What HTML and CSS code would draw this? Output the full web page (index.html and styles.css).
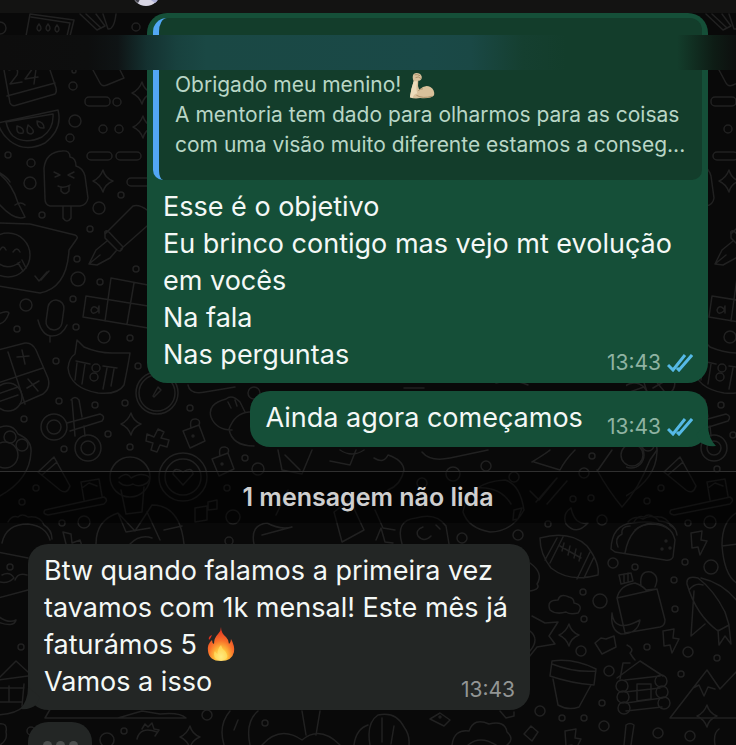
FILE: index.html
```html
<!DOCTYPE html>
<html lang="pt">
<head>
    <meta charset="UTF-8">
    <meta name="viewport" content="width=device-width, initial-scale=1.0">
    <title>Conversa</title>
    <link rel="stylesheet" href="styles.css">
</head>
<body>

<!-- Wallpaper doodles -->
<svg class="wallpaper" viewBox="0 0 736 745" preserveAspectRatio="xMidYMin slice" aria-hidden="true">
    <defs>
        <path id="star" d="M0-11Q2-3 10 0Q2 3 0 11Q-3 3-10 0Q-3-3 0-11Z"/>
        <path id="bolt" d="M-7-10L4-12L3-3L9-2L2 12L0 4L-6 5Z"/>
        <g id="lock"><path d="M-10-5L6-11L12 5L-3 12ZM-2-8Q-4-18 3-17Q8-16 6-11"/><circle r="1"/></g>
    </defs>
    <g id="tile">
        <!-- box, pencils, calendar, watermelon -->
        <path d="M26 36L30 14L74 20L70 36M31 17L70 23L67 36M80 14L97 30L105 26L96 14M86 14L101 28M103 14L108 29Q114 30 116 14"/>
        <path d="M39 24q-4 5 0 7q4-2 0-7M48 24q-4 5 0 7q4-2 0-7M57 25q-4 5 0 7q4-2 0-7"/>
        <path d="M4 70L10 103Q12 107 17 105L55 94Q57 92 56 88L50 70M7 96L55 83M93 70L100 83Q102 87 107 85L124 78L120 70"/>
        <path d="M9 70Q20 66 17 75L10 84L22 82M33 68L25 79L38 77M36 69L34 84"/>
        <path d="M-2 123L58 110Q63 129 45 143Q25 153 10 141Q1 134-2 123M6 122L53 114Q54 129 42 137Q25 145 13 136Q8 131 6 122"/>
        <path d="M17 126q-1 9 6 7q2-5-6-7M28 125q-3 9 3 9q6-2-3-9M37 121q0 8 7 7q0-6-7-7"/>
        <rect x="85" y="97" width="25" height="9" rx="4"/><rect x="87" y="152" width="25" height="8" rx="4"/>
        <rect x="116" y="152" width="25" height="8" rx="4"/><rect x="127" y="178" width="24" height="8" rx="4"/>
        <use href="#star" x="142" y="93"/><use href="#star" x="143" y="127"/><use href="#star" x="103" y="181"/>
        <!-- ice cream -->
        <path d="M45 199L44 168Q46 152 62 151Q70 150 70 157Q76 158 76 166Q83 168 85 176L88 198Q87 205 80 206L50 206Q45 205 45 199M63 206V218Q67 224 71 218V206M54 172l6 3l-5 2M74 172l-6 3l6 3M58 186q6 3 12-1M61 187v4q4 5 8 0v-5"/>
        <path d="M-2 173Q12 183 18 203L25 217Q15 222-2 203M0 173Q8 178 10 182M15 205q6-4 10 0"/>
        <!-- marker -->
        <path d="M105 234L133 206Q139 204 147 210M121 249L147 226M105 234Q104 230 108 231L123 247Q121 253 117 250L105 238ZM107 241L96 250L89 264L97 265L110 258L116 251M89 264L100 255"/>
        <!-- banner with face -->
        <path d="M-2 223L30 224L75 235Q79 237 76 240L69 250Q67 288 40 293L-2 286M35 276l4 5l8-9M41 280l8-9"/>
        <circle cx="8" cy="255" r="22"/><path d="M0 250q3-6 6 0M13 252q4-6 7 0M-2 263Q8 271 20 262M18 263l5 8M22 260l4 8"/>
        <!-- microphone -->
        <rect x="47" y="300" width="16" height="30" rx="8" transform="rotate(8 55 315)"/><path d="M38 320Q42 336 52 336Q62 336 67 325M50 336V342"/>
        <!-- keypad -->
        <path d="M86 296L148 306M83 317L148 328M86 296L83 317M111 278L105 321M134 283L127 324M111 278L148 285"/><path d="M98 309q-5-5-7 1q1 6 7 1l1-5v7"/>
        <path d="M-2 314Q8 310 9 313Q5 324-2 324"/>
        <!-- calculator -->
        <path d="M-2 350L25 343Q32 342 36 350L48 378Q51 388 43 394L20 404M8 352L25 404M-2 383L43 368M17 357l12-1M22 350l3 14M27 388l12-7M28 379l10 12"/><circle cx="8" cy="397" r="14"/><path d="M-2 394l20-7M-2 402l20-7"/>
        <!-- cat -->
        <path d="M77 340L84 347Q98 353 112 353L130 353Q128 366 124 385Q118 395 98 393Q70 388 68 368Q69 358 75 354ZM76 361L90 364M77 363L75 380M85 364L82 384M103 366L117 368M107 368L103 389M114 369L111 386"/><circle cx="96" cy="368" r="4"/><circle cx="94" cy="377" r="4"/>
        <!-- scissors -->
        <circle cx="54" cy="427" r="13"/><circle cx="54" cy="427" r="7"/><circle cx="88" cy="448" r="13"/><circle cx="88" cy="448" r="7"/>
        <path d="M67 423L100 414Q106 416 102 421L70 431M71 400Q75 395 79 400L82 417M72 400L75 436M84 426L85 436"/>
        <!-- paw -->
        <circle cx="5" cy="455" r="13"/><circle cx="10" cy="437" r="6"/><circle cx="22" cy="445" r="6"/><path d="M-2 428Q12 422 18 434Q32 440 31 452Q30 480-2 497"/>
        <!-- cone, brush -->
        <path d="M38 472L54 457L70 486Q67 495 60 490ZM42 475L57 462M45 510L104 497Q109 500 104 504L48 515Q42 514 45 510M84 500L81 482L99 479L102 496M82 488l7-5l8 3"/>
        <!-- hat and man on the left edge -->
        <path d="M2 543Q6 524 28 524Q46 526 50 540M8 522q4-7 10-5q4-4 10 0q12-2 16 8q8 5 8 14M-2 552L28 558M2 575q8-4 12 3q-6 6-14 4M15 580q3-8 12-5M-2 598L28 590M-2 622Q14 628 16 620Q8 624-2 616"/>
        <path d="M-2 679L16 661L28 672M-2 680L28 676M0 688H24M9 686V702M24 684L22 706M-2 702H22M-2 715Q16 714 24 706M-2 724q10-2 8 8q2 8-6 13"/>
        <path d="M63 532l8 2l1 9l8-3l2 6l-7 5l-8-3z"/>
    </g>
    <!-- right edge repeats the upper left doodles -->
    <g clip-path="url(#upper)"><use href="#tile" x="626"/></g>
    <clipPath id="upper"><rect x="626" y="0" width="110" height="530"/></clipPath>
    <!-- middle strip, under the bubbles -->
    <circle cx="157" cy="393" r="21"/><circle cx="157" cy="393" r="18"/><path d="M153 396l5-9l3 3l-7 7zM188 385Q190 395 205 392L235 387"/>
    <use href="#star" x="131" y="424"/>
    <path d="M147 434l7 3l4-8l6 3l-3 6l8 2l-2 7l-7-2l-3 7l-6-2l2-7l-7-2z"/>
    <use href="#lock" x="193" y="436"/><use href="#lock" x="222" y="464"/>
    <path d="M211 417Q207 404 226 399Q232 394 240 402L245 412M211 417Q216 430 232 430M229 429Q235 413 249 412L258 412M229 429Q232 446 254 446M228 402l3 6M235 400l2 6"/>
    <circle cx="130" cy="477" r="20"/><path d="M119 478q8-7 12 0q8-5 14-3q8 2 2 8q-8 5-14 1q-8 4-14-2M121 490L126 514L142 512L144 487M96 544Q96 520 118 513L135 531L152 505Q180 505 184 544M118 513L126 532L150 528M130 544q10-10 22-6M147 512L160 540M164 530l18-4"/>
    <circle cx="183" cy="477" r="24"/><circle cx="183" cy="477" r="18"/><path d="M183 485L173 474Q174 466 183 472Q192 466 193 474Z"/>
    <path d="M195 508l12-2v14l-12 2zM208 502l9-2v9l-9 1zM254 544Q250 525 267 523Q280 530 292 527L262 535M278 450L282 470L302 474L312 450M285 455L300 470M330 461L350 465L356 450M276 515L288 490M334 512L350 500L364 530L342 542Z"/>
    <path d="M374 458q10 6 14-3q15 5 16 15q-3 15-16 20M375 510l8 18l12 2M402 544Q395 520 416 518Q436 512 446 526L449 544M423 527q-8 3-5 9q6 7 13 0M440 529l-4-4"/>
    <path d="M422 452Q430 462 450 458L488 450M532 462Q548 452 550 450M534 462L560 470Q565 460 575 450M463 512Q468 482 505 480Q520 484 524 510Q512 532 490 532Q468 528 463 512M476 488q24-2 35 16M514 510l8-2l-4 11l-5 1z"/>
    <path d="M530 491l9 9l18-22M536 502l20-23M547 504l20-23M597 470Q608 490 622 507Q638 490 650 460L657 450M598 470L612 450"/>
    <path d="M376 540l5-12l4 14l8 1M404 388h20M496 383q16-5 32 2M340 450q12 8 24 0"/>
    <!-- moon, football -->
    <path d="M571 508Q562 514 566 524Q576 536 588 523Q575 526 571 508"/>
    <path d="M540 538Q570 530 587 546Q600 563 598 575Q570 583 551 568Q540 554 540 538M545 560L557 538M550 563L563 537M577 579L590 552M584 578L594 557M560 546L581 558M564 543l-2 8M570 546l-2 9M576 549l-2 9M581 553l-2 8"/>
    <!-- taco -->
    <path d="M611 549Q612 525 632 523Q670 518 675 540L673 557Q671 561 665 560L615 552ZM625 553Q630 525 652 523M628 522q6-7 15-3q10-6 16 2q16 1 18 14M618 547q-4-9 4-13q-1-8 8-8"/>
    <circle cx="666" cy="541" r="1"/><circle cx="662" cy="549" r="1"/><circle cx="670" cy="548" r="1"/>
    <use href="#bolt" x="698" y="543"/><use href="#bolt" x="670" y="641"/><use href="#bolt" x="572" y="741"/>
    <path d="M738 512Q722 520 722 545Q724 576 738 584M722 546l16-2"/>
    <!-- jar -->
    <path d="M617 598Q620 585 635 583Q643 586 646 590L657 589L665 620Q665 626 660 627L625 633L617 598L657 589M619 575l12-2l2 8l-12 3zM624 574v8M628 573v8M641 586q-2-16 10-14q9 4 4 15M612 613Q614 634 640 620Q638 634 621 634Q610 630 612 613"/>
    <!-- rocket -->
    <path d="M687 584Q686 575 698 578Q714 590 725 612L729 625L718 631Q696 615 687 584M694 591l-3 45l14-12M701 578Q723 583 738 602M689 590q6-8 14-5M718 630l1 15l6-9l6 8l-2-18"/>
    <!-- cloud, splash, camera -->
    <path d="M550 610q-4-10 8-10q2-7 11-3q5 1 5 6q10 2 4 10q-8 2-12-1q-10 3-16-2M532 616l13 7l13-1l-9 14l6 8l-18 3l-8 10M530 563q14 10 7 21q4 5-7 7M530 631q10 8 0 20M595 643l6-5l5 1l8-3l2 11l-14 7z"/>
    <use href="#star" x="569" y="635"/><use href="#star" x="190" y="737"/><use href="#star" x="707" y="716"/>
    <!-- flower pot -->
    <path d="M552 661Q574 658 596 669L594 685Q570 683 550 676ZM552 664Q575 673 596 671M553 679L558 705Q568 711 579 707L591 685"/>
    <!-- log house -->
    <path d="M617 678L640 661L663 676M620 679L623 663H630M625 680L660 676M625 692L660 688M626 703L662 698M637 684h14v15l-14 2zM626 711L662 707M627 645q8 4 3 8q3 5 5 7"/>
    <circle cx="622" cy="686" r="6"/><circle cx="623" cy="697" r="6"/><circle cx="624" cy="708" r="6"/><circle cx="661" cy="681" r="6"/><circle cx="662" cy="692" r="6"/><circle cx="664" cy="703" r="6"/>
    <!-- mountain -->
    <path d="M670 718L707 670L720 689L738 670M670 718H738M693 688l6-3l5 11l4-9l7 2"/>
    <!-- bottom strip -->
    <path d="M45 718L52 706M45 718H186Q180 712 160 714L142 711L118 718M137 739q3-13 20-7M142 729l3-5l3 3l4-4l2 6l5 1l-4 6M224 745Q218 725 230 711M250 745Q245 722 258 711M238 720l-4 10M262 745Q280 725 302 740Q320 725 340 745M306 735L302 711M316 735L320 711M354 745q2-16 14-20"/>
    <path d="M370 745q-4-22 8-30q18-4 26 12q6 8 5 18M382 718v24M394 726l-3 18M430 719l10-6l10 7l-6 6zM452 745q2-16 17-14q5-14 20-7q16-4 18 8q8 7 0 13M468 745q12-10 28 0M500 711l6 7l8-2v-4M524 734l7-8l7 6l-6 9zM624 745l2-20q4-3 8 0l-3 20M715 745q-2-12 4-16"/>
    <!-- loose dots -->
    <circle cx="0" cy="28" r="6"/><circle cx="136" cy="27" r="4"/><circle cx="73" cy="86" r="4"/><circle cx="74" cy="71" r="2"/><circle cx="117" cy="102" r="4"/><circle cx="75" cy="121" r="6"/><circle cx="103" cy="129" r="4"/><circle cx="119" cy="129" r="4"/><circle cx="728" cy="129" r="4"/><circle cx="70" cy="138" r="4"/><circle cx="8" cy="155" r="3"/><circle cx="31" cy="163" r="4"/><circle cx="30" cy="183" r="6"/><circle cx="121" cy="195" r="3"/>
    <circle cx="99" cy="208" r="6"/><circle cx="90" cy="229" r="3"/><circle cx="42" cy="215" r="3"/><circle cx="77" cy="259" r="3"/><circle cx="78" cy="279" r="7"/><circle cx="100" cy="282" r="3"/><circle cx="136" cy="269" r="3"/><circle cx="73" cy="299" r="3"/><circle cx="26" cy="305" r="6"/><circle cx="17" cy="329" r="3"/><circle cx="76" cy="327" r="3"/><circle cx="104" cy="337" r="6"/><circle cx="130" cy="338" r="3"/><circle cx="56" cy="361" r="3"/><circle cx="138" cy="366" r="3"/>
    <circle cx="59" cy="401" r="3"/><circle cx="95" cy="405" r="3"/><circle cx="125" cy="403" r="3"/><circle cx="24" cy="419" r="3"/><circle cx="108" cy="434" r="3"/><circle cx="64" cy="449" r="3"/><circle cx="130" cy="447" r="3"/><circle cx="190" cy="408" r="3"/><circle cx="254" cy="393" r="6"/><circle cx="245" cy="458" r="3"/><circle cx="258" cy="469" r="6"/>
    <circle cx="36" cy="488" r="3"/><circle cx="22" cy="502" r="3"/><circle cx="62" cy="523" r="3"/><circle cx="84" cy="522" r="6"/><circle cx="10" cy="567" r="3"/><circle cx="21" cy="647" r="3"/><circle cx="233" cy="517" r="7"/><circle cx="227" cy="488" r="3"/><circle cx="229" cy="541" r="4"/><circle cx="207" cy="715" r="5"/><circle cx="124" cy="731" r="3"/><circle cx="107" cy="740" r="7"/><circle cx="265" cy="723" r="3"/><circle cx="31" cy="731" r="4"/>
    <circle cx="453" cy="474" r="7"/><circle cx="486" cy="466" r="5"/><circle cx="514" cy="477" r="5"/><circle cx="422" cy="483" r="5"/><circle cx="518" cy="535" r="5"/><circle cx="462" cy="538" r="5"/><circle cx="548" cy="524" r="3"/><circle cx="584" cy="473" r="5"/><circle cx="592" cy="456" r="3"/><circle cx="632" cy="455" r="11"/><circle cx="573" cy="499" r="3"/><circle cx="591" cy="498" r="3"/><circle cx="602" cy="520" r="5"/><circle cx="647" cy="501" r="3"/><circle cx="661" cy="488" r="3"/><circle cx="717" cy="469" r="3"/><circle cx="688" cy="523" r="3"/><circle cx="710" cy="522" r="6"/>
    <circle cx="613" cy="563" r="5"/><circle cx="635" cy="567" r="3"/><circle cx="685" cy="562" r="3"/><circle cx="711" cy="567" r="7"/><circle cx="583" cy="592" r="3"/><circle cx="600" cy="601" r="7"/><circle cx="584" cy="619" r="3"/><circle cx="674" cy="580" r="3"/><circle cx="675" cy="609" r="3"/><circle cx="581" cy="651" r="5"/><circle cx="647" cy="647" r="3"/><circle cx="688" cy="652" r="5"/><circle cx="717" cy="658" r="3"/><circle cx="609" cy="671" r="5"/><circle cx="681" cy="674" r="3"/><circle cx="602" cy="703" r="3"/><circle cx="540" cy="711" r="5"/><circle cx="562" cy="718" r="3"/><circle cx="584" cy="718" r="3"/><circle cx="604" cy="726" r="5"/><circle cx="658" cy="733" r="5"/><circle cx="690" cy="736" r="5"/><circle cx="440" cy="717" r="1"/><circle cx="730" cy="337" r="6"/><circle cx="721" cy="405" r="3"/><circle cx="733" cy="435" r="3"/>
</svg>

<header class="topbar">
    <svg class="avatar" viewBox="0 0 28 28" aria-hidden="true">
        <circle cx="14" cy="14" r="14" fill="#d8d6e4"/>
        <path d="M0 14A14 14 0 0 0 6 25L12 14Z" fill="#42424c"/>
        <path d="M16 20L28 16Q27 22 23 25Z" fill="#aeb1d8"/>
    </svg>
</header>

<div class="redaction"></div>

<main class="chat">
    <article class="bubble sent long">
        <blockquote class="quote">
            <p>Obrigado meu menino! <svg class="emoji" viewBox="0 0 28 30" role="img" aria-label="bíceps">
                <path d="M5 2Q8 0 12 2Q15 5 13 8Q11 10 10 9Q9 15 11 19Q17 13 23 16Q28 19 27 25Q24 29 12 28Q5 29 1 27Q2 19 5 10Q3 5 5 2Z" fill="#d9c19b"/>
                <path d="M1 27Q2 19 5 10L9 10Q7 18 9 23Q5 23 4 28Z" fill="#eddcba"/>
                <path d="M6 3Q9 2 12 4M7 6Q10 4 13 7M10 20Q12 18 15 18M8 25Q15 29 25 26" fill="none" stroke="#a98c66" stroke-width="1"/>
            </svg></p>
            <p>A mentoria tem dado para olharmos para as coisas com uma visão muito diferente estamos a conseg...</p>
        </blockquote>
        <div class="body">
            <p>Esse é o objetivo<br>Eu brinco contigo mas vejo mt evolução em vocês<br>Na fala<br>Nas perguntas</p>
            <div class="meta">
                <time>13:43</time>
                <svg class="ticks" viewBox="0 0 26 18" role="img" aria-label="Lida"><path d="M1 11L6 16L18 1M10 14L12 16L25 1"/></svg>
            </div>
        </div>
    </article>

    <article class="bubble sent short">
        <div class="body">
            <p>Ainda agora começamos</p>
            <div class="meta">
                <time>13:43</time>
                <svg class="ticks" viewBox="0 0 26 18" role="img" aria-label="Lida"><path d="M1 11L6 16L18 1M10 14L12 16L25 1"/></svg>
            </div>
        </div>
        <svg class="tail tail-right" viewBox="0 0 20 24" aria-hidden="true"><path d="M12 0Q12 14 20 22Q10 23 4 18L0 10Z"/></svg>
    </article>

    <div class="unread">1 mensagem não lida</div>

    <article class="bubble received">
        <div class="body">
            <p>Btw quando falamos a primeira vez<br>tavamos com 1k mensal! Este mês já<br>faturámos 5 <svg class="emoji fire" viewBox="0 0 28 36" role="img" aria-label="fogo">
                <defs>
                    <radialGradient id="flame" cx="50%" cy="88%" r="80%">
                        <stop offset="0" stop-color="#fff3a0"/>
                        <stop offset="0.3" stop-color="#ffc03a"/>
                        <stop offset="0.6" stop-color="#f9712a"/>
                        <stop offset="1" stop-color="#df3421"/>
                    </radialGradient>
                </defs>
                <path d="M14 1Q14 7 19 11Q22 14 22 18Q24 16 24 13Q28 20 27 26Q25 35 14 35Q2 35 1 25Q0 18 5 14Q5 17 7 18Q7 12 11 8Q14 5 14 1Z" fill="url(#flame)"/>
                <path d="M3 10Q1 12 2 14Q4 12 5 9Z" fill="#df3421"/>
                <path d="M14 19Q15 23 18 25Q22 30 19 33Q13 36 8 32Q6 28 8 25Q9 28 11 28Q10 23 14 19Z" fill="#ffe66b" opacity="0.6"/>
            </svg><br>Vamos a isso</p>
            <div class="meta"><time>13:43</time></div>
        </div>
        <svg class="tail tail-left" viewBox="0 0 20 24" aria-hidden="true"><path d="M8 0Q8 14 0 22Q10 23 16 18L20 10Z"/></svg>
    </article>

    <article class="bubble typing" aria-label="a escrever"><i></i><i></i><i></i></article>
</main>

</body>
</html>
```
FILE: styles.css
```css
* {
    box-sizing: border-box;
}
body {
    position: relative;
    display: flex;
    flex-direction: column;
    margin: 0;
    height: 100vh;
    overflow: hidden;
    background-color: #090909;
    font-family: Inter, "Liberation Sans", sans-serif;
    color: #f4f8f6;
}
p, blockquote {
    margin: 0;
}
.wallpaper {
    position: absolute;
    inset: 0;
    z-index: -1;
    width: 100%;
    height: 100%;
    fill: none;
    stroke: #212121;
    stroke-width: 1.5;
    stroke-linejoin: round;
    stroke-linecap: round;
}

/* Top bar */
.topbar {
    display: flex;
    flex: none;
    align-items: flex-end;
    height: 13px;
    padding: 0 132px 7px;
    background-color: #131312;
}
.avatar {
    width: 28px;
    height: 28px;
    flex: none;
}
.redaction {
    position: absolute;
    top: 35px;
    left: 0;
    right: 0;
    z-index: 2;
    height: 35px;
    background: linear-gradient(to right, #0d0d0d 0, #0d0e0e 12%, #0f1415 16%, #143130 20%, #18413e 24%, #1a4844 28%, #1a4947 58%, #1a4845 64%, #153f30 71%, #133d2b 77%, #133d2b 92%, #0e1c15 97%, #0d0f0e 100%);
}

/* Messages */
.chat {
    display: flex;
    flex: 1;
    flex-direction: column;
    align-items: flex-start;
    min-height: 0;
    overflow: hidden;
}
.bubble {
    position: relative;
    flex: none;
    margin: 0 28px;
    border-radius: 20px;
    font-size: 27px;
    line-height: 37px;
}
.sent {
    align-self: flex-end;
    background-color: #154f38;
}
.received {
    width: 502px;
    max-width: 75%;
    margin-top: 21px;
    background-color: #232625;
}
.long {
    width: 561px;
    max-width: 83%;
    padding-top: 5px;
}
.short {
    margin-top: 8px;
}
.body {
    display: flex;
    justify-content: space-between;
    align-items: flex-end;
    padding: 8px 15px 10px 16px;
}
.long .meta,
.received .meta {
    position: absolute;
    right: 15px;
    bottom: 7px;
}
.quote {
    margin: 0 6px;
    padding: 52px 8px 20px 16px;
    border-left: 6px solid #52a7f5;
    border-radius: 14px 12px 10px 10px;
    background-color: #133d2b;
    color: #b9d6c6;
    font-size: 21px;
    line-height: 30px;
}
.short .body {
    gap: 24px;
    padding-bottom: 11px;
}
.short .meta {
    margin-bottom: -4px;
}
.meta {
    display: flex;
    align-items: center;
    gap: 6px;
    color: #8fb3a2;
    font-size: 21px;
    line-height: 26px;
}
.received .meta {
    color: #929594;
}
.ticks {
    width: 26px;
    height: 18px;
    fill: none;
    stroke: #55b9e6;
    stroke-width: 3;
}
.emoji {
    width: 26px;
    height: 28px;
    margin: -4px 2px;
    vertical-align: -4px;
}
.fire {
    width: 28px;
    height: 36px;
    vertical-align: -4px;
}
.tail {
    position: absolute;
    bottom: -1px;
    width: 20px;
    height: 24px;
}
.tail-right {
    right: -8px;
    fill: #154f38;
}
.tail-left {
    left: -8px;
    fill: #232625;
}

/* Unread divider */
.unread {
    flex: none;
    align-self: stretch;
    margin-top: 24px;
    padding: 7px 0 8px;
    border-top: 1px solid #303030;
    background-color: rgba(0, 0, 0, 0.45);
    color: #cfcfcf;
    font-size: 25px;
    font-weight: 600;
    line-height: 36px;
    text-align: center;
}

/* Typing bubble, cut by the bottom of the window */
.typing {
    display: flex;
    justify-content: center;
    gap: 4px;
    width: 64px;
    height: 48px;
    margin-top: 12px;
    padding-top: 19px;
    background-color: #232625;
}
.typing i {
    width: 9px;
    height: 9px;
    border-radius: 50%;
    background-color: #4b4e4d;
}
```
